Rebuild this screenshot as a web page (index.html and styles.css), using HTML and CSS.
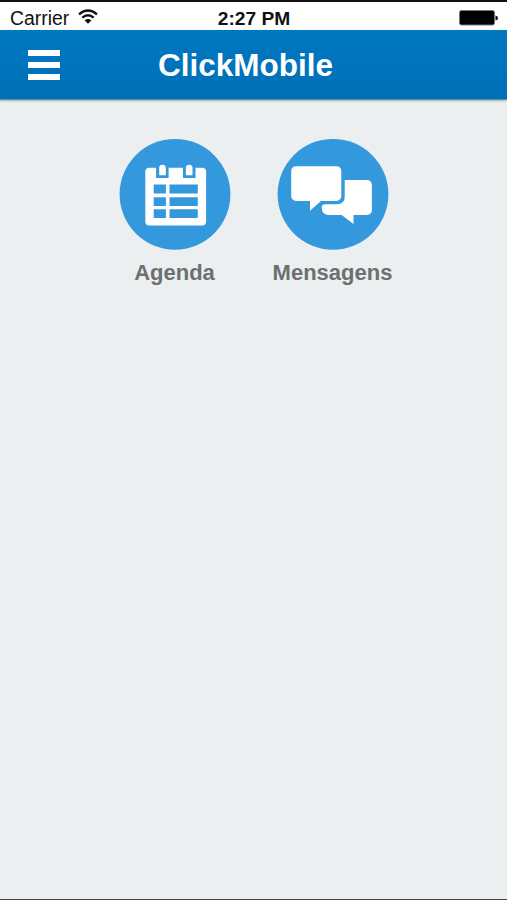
FILE: index.html
```html
<!DOCTYPE html>
<html lang="pt">
<head>
<meta charset="utf-8">
<title>ClickMobile</title>
<link rel="stylesheet" href="styles.css">
</head>
<body>
<div class="screen">
  <div class="status">
    <div class="carrier">
      <span>Carrier</span>
      <svg class="wifi" width="20" height="16" viewBox="0 0 20 16" fill="none" stroke="#111" stroke-width="2.3">
        <path d="M1 5.3Q10 -2.2 19 5.3"/>
        <path d="M4.3 8.7Q10 3.8 15.7 8.7"/>
        <path d="M10 14.8L6.6 11.4Q10 8.6 13.4 11.4Z" fill="#111" stroke="none"/>
      </svg>
    </div>
    <div class="time">2:27 PM</div>
    <svg class="battery" width="39" height="16" viewBox="0 0 39 16">
      <rect x=".5" y=".5" width="35" height="14.5" rx="2" fill="#000" stroke="#777"/>
      <path d="M36.5 5.5Q39 6 39 8T36.5 10.5Z"/>
    </svg>
  </div>
  <header class="header">
    <button class="menu" aria-label="Menu"><i></i><i></i><i></i></button>
    <h1 class="title">ClickMobile</h1>
  </header>
  <main class="apps">
    <a class="app">
      <svg width="112" height="112" viewBox="119 138 112 112">
        <circle cx="175" cy="194.3" r="55.4" fill="#3499dc"/>
        <rect x="145.3" y="167.8" width="60.8" height="57.7" rx="4" fill="#fff"/>
        <path d="M156.1 167v11.1h12.5V167M183 167v11.1h12.5V167" fill="#3499dc"/>
        <path d="M159.2 175.2v-7.2a3.3 3.3 0 0 1 6.6 0v7.2zM185.9 175.2v-7.2a3.3 3.3 0 0 1 6.6 0v7.2z" fill="#fff"/>
        <path d="M153.7 184.4h12.2v9.2h-12.2zM169.5 184.4h28.3v9.2h-28.3zM153.7 197.2h12.2v8.7h-12.2zM169.5 197.2h28.3v8.7h-28.3zM153.7 209.2h12.2v8.9h-12.2zM169.5 209.2h28.3v8.9h-28.3z" fill="#3499dc"/>
      </svg>
      <span>Agenda</span>
    </a>
    <a class="app">
      <svg width="112" height="112" viewBox="277 138 112 112">
        <circle cx="333" cy="194.3" r="55.4" fill="#3499dc"/>
        <path d="M296 166.2h40.5a4.8 4.8 0 0 1 4.8 4.8v25.2a4.8 4.8 0 0 1-4.8 4.8H321L310 210.7V201h-14a4.8 4.8 0 0 1-4.8-4.8V171a4.8 4.8 0 0 1 4.8-4.8z" fill="#fff"/>
        <path d="M344.7 180h22.5a4.7 4.7 0 0 1 4.7 4.7v25.5a4.7 4.7 0 0 1-4.7 4.7h-13.7v9.2L341.7 214.9h-14.2q-5.7-1-5.7-7.2v-1.6q1-1.8 3-1.8H337q7.7-.4 7.7-7.3z" fill="#fff"/>
      </svg>
      <span>Mensagens</span>
    </a>
  </main>
</div>
</body>
</html>
```
FILE: styles.css
```css
* {
  box-sizing: border-box;
}

body {
  margin: 0;
  font-family: "Liberation Sans", Arial, sans-serif;
}

.screen {
  display: flex;
  flex-direction: column;
  height: 900px;
  background: #ebeff0;
  border-top: 2px solid #151113;
  border-bottom: 1px solid #414243;
}

.status {
  display: grid;
  grid-template-columns: 1fr auto 1fr;
  align-items: center;
  height: 28px;
  padding: 5px 9px 0 10px;
  background: #fff;
  color: #111;
  font-size: 19.4px;
  line-height: 23px;
}

.carrier {
  display: flex;
  align-items: center;
  gap: 9px;
}

.wifi {
  margin-top: -4px;
}

.time {
  font-size: 19.2px;
  font-weight: bold;
}

.battery {
  justify-self: end;
  margin-top: -2px;
}

.header {
  display: grid;
  grid-template-columns: 158px 1fr;
  align-items: center;
  height: 70px;
  background: linear-gradient(#0077c1, #0070b7);
  border-bottom: 1px solid #548eb5;
  box-shadow: 0 1px 2px #a9adb0;
}

.menu {
  display: grid;
  gap: 6px;
  width: 32px;
  margin-left: 28px;
  padding: 0;
  border: 0;
  background: none;
}

.menu i {
  height: 6px;
  background: #fff;
}

.title {
  margin: 1px 0 0;
  color: #fff;
  font-size: 31.5px;
  line-height: 40px;
}

.apps {
  display: flex;
  justify-content: center;
  gap: 28px;
  padding-top: 38px;
}

.app {
  display: flex;
  flex-direction: column;
  align-items: center;
  gap: 10px;
  width: 130px;
  color: #6d7072;
  font-size: 22px;
  font-weight: bold;
  line-height: 26px;
}
```
